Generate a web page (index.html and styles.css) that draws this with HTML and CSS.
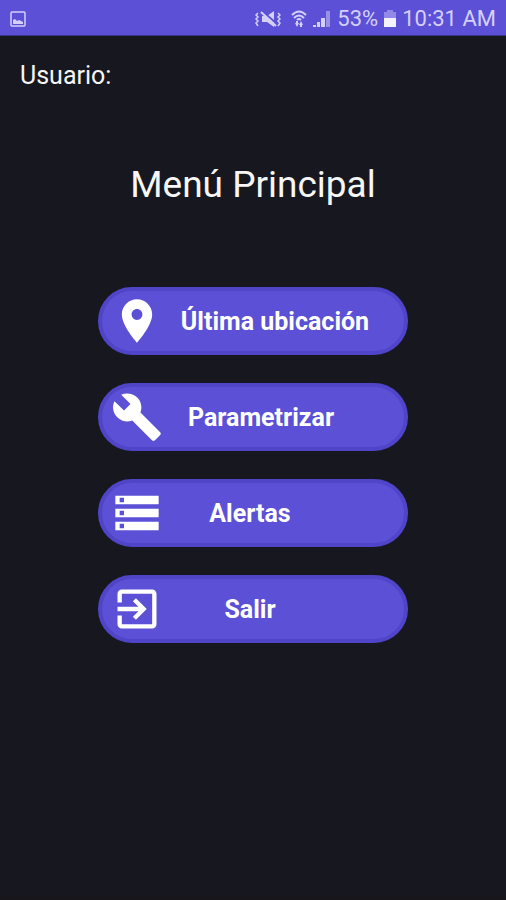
FILE: index.html
```html
<!DOCTYPE html>
<html lang="es">
<head>
  <meta charset="UTF-8">
  <meta name="viewport" content="width=device-width, initial-scale=1.0">
  <title>Menú Principal</title>
  <link rel="stylesheet" href="styles.css">
</head>
<body>
  <!-- Status bar -->
  <header class="status-bar">
    <svg class="photo-icon" viewBox="0 0 16 16" aria-hidden="true">
      <rect x="1" y="1" width="14" height="14" rx="1" fill="none" stroke="currentColor" stroke-width="1.5"/>
      <path d="M3 13V9l2-1 2 2 2-1 4 2v2z" fill="currentColor"/>
    </svg>
    <div class="status-right">
      <svg class="mute-icon" viewBox="0 0 26 18" aria-hidden="true">
        <path d="M7 6h5l7-5v16l-7-5H7z" fill="currentColor"/>
        <path d="M6 0l16 14" stroke="#5b50d6" stroke-width="2"/>
        <path d="M6 2l15 14" stroke="currentColor" stroke-width="2"/>
        <path d="M3 3L1 5l2 2-2 2 2 2-2 2 2 3M23 3l2 2-2 2 2 2-2 2 2 2-2 3" fill="none" stroke="currentColor" stroke-width="1.5"/>
      </svg>
      <svg class="wifi-icon" viewBox="0 0 16 18" aria-hidden="true">
        <path d="M1 5q7-7 14 0M3 8q5-5 10 0M6 10q2-2 4 0" fill="none" stroke="currentColor" stroke-width="2"/>
        <path d="M4 13h1v-2h2v2h1l-2 4zM8 15l2-4 2 4h-1v2H9v-2z" fill="currentColor"/>
      </svg>
      <svg class="signal-icon" viewBox="0 0 18 18" aria-hidden="true">
        <path d="M0 15h3v2H0zM4 12h3v5H4zM8 8h4v9H8z" fill="currentColor"/>
        <path d="M13 1h4v16h-4z" fill="currentColor" opacity=".5"/>
      </svg>
      <span class="battery-text">53%</span>
      <svg class="battery-icon" viewBox="0 0 12 18" aria-hidden="true">
        <path d="M3 0h6v2h3v6H0V2h3z" fill="currentColor" opacity=".45"/>
        <path d="M0 8h12v9H0z" fill="#f4f2ff"/>
      </svg>
      <span class="clock">10:31 AM</span>
    </div>
  </header>

  <main class="content">
    <p class="user">Usuario:</p>
    <h1>Menú Principal</h1>

    <nav class="menu">
      <button type="button" class="menu-btn location">
        <svg viewBox="0 0 24 24" aria-hidden="true"><path d="M12 2C8.130 2 5 5.130 5 9c0 5.250 7 13 7 13s7-7.750 7-13c0-3.870-3.130-7-7-7zm0 9.500c-1.380 0-2.500-1.120-2.500-2.500s1.120-2.500 2.500-2.500 2.500 1.120 2.500 2.500-1.120 2.500-2.500 2.500z"/></svg>
        <span>Última ubicación</span>
      </button>
      <button type="button" class="menu-btn settings">
        <svg viewBox="0 0 24 24" aria-hidden="true"><path d="M22.700 19l-9.100-9.100c.9-2.300.4-5-1.500-6.900-2-2-5-2.400-7.400-1.300L9 6 6 9 1.600 4.700C.4 7.100.9 10.100 2.900 12.100c1.900 1.900 4.600 2.400 6.900 1.500l9.100 9.100c.4.4 1 .4 1.400 0l2.300-2.300c.5-.4.5-1.100.1-1.400z"/></svg>
        <span>Parametrizar</span>
      </button>
      <button type="button" class="menu-btn">
        <svg viewBox="0 0 24 24" aria-hidden="true"><path d="M2 20h20v-4H2v4zm2-3h2v2H4v-2zM2 4v4h20V4H2zm4 3H4V5h2v2zm-4 7h20v-4H2v4zm2-3h2v2H4v-2z"/></svg>
        <span>Alertas</span>
      </button>
      <button type="button" class="menu-btn">
        <svg viewBox="0 0 24 24" aria-hidden="true"><path d="M10.090 15.590L11.500 17l5-5-5-5-1.410 1.410L12.670 11H3v2h9.670l-2.580 2.590zM19 3H5c-1.110 0-2 .9-2 2v4h2V5h14v14H5v-4H3v4c0 1.100.89 2 2 2h14c1.100 0 2-.9 2-2V5c0-1.100-.9-2-2-2z"/></svg>
        <span>Salir</span>
      </button>
    </nav>
  </main>
</body>
</html>
```

FILE: styles.css
```css
* { margin: 0; padding: 0; box-sizing: border-box; font-family: Roboto, sans-serif; }

body {
  background: #17181f;
  color: #f6f6f6;
  min-height: 100vh;
  border-bottom: 3px solid #1a141b;
}

.status-bar {
  display: flex;
  justify-content: space-between;
  align-items: center;
  height: 36px;
  padding: 2px 10px 0;
  background: #5b50d6;
  border-bottom: 1px solid #38348a;
  color: #d5d0fb;
  font-size: 22px;
}
.status-right {
  display: flex;
  align-items: center;
  gap: 6px;
}
.photo-icon { width: 16px; height: 16px; }
.mute-icon { width: 26px; height: 18px; }
.wifi-icon { width: 16px; height: 18px; margin-left: 4px; }
.signal-icon { width: 18px; height: 18px; }
.battery-icon { width: 12px; height: 18px; }

.content { text-align: center; }
.user {
  padding: 24px 20px 0;
  font-size: 25px;
  line-height: 32px;
  text-align: left;
}
h1 {
  margin-top: 69px;
  font-size: 37px;
  line-height: 48px;
  font-weight: normal;
}

.menu {
  display: flex;
  flex-direction: column;
  align-items: center;
  gap: 28px;
  padding: 78px 20px 28px;
}
.menu-btn {
  display: flex;
  align-items: center;
  width: 100%;
  max-width: 310px;
  height: 68px;
  padding: 0 67px 0 9px;
  background: #5b50d6;
  border: 4px solid #5044c8;
  border-radius: 34px;
  color: #fff;
  font-size: 25px;
  font-weight: bold;
  cursor: pointer;
}
.menu-btn svg { width: 52px; height: 52px; fill: currentColor; flex-shrink: 0; }
.menu-btn span { flex: 1; white-space: nowrap; }
.menu-btn.location { padding-right: 17px; }
.menu-btn.settings { padding-right: 45px; }
```
